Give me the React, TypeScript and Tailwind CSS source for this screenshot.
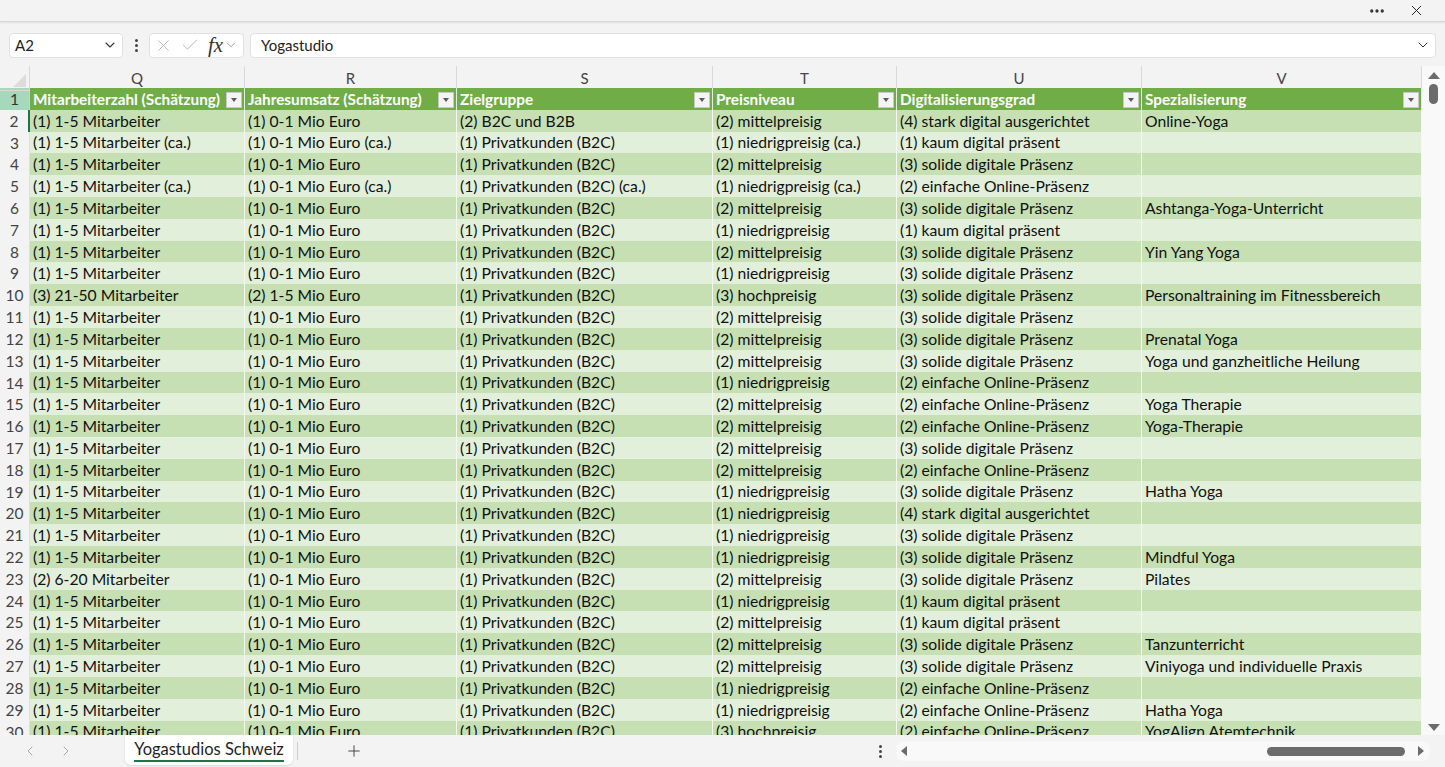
import { ChevronDown, ChevronLeft, ChevronRight, Check, X, Plus, MoreHorizontal } from "lucide-react";

const columns = [
  { letter: "Q", title: "Mitarbeiterzahl (Schätzung)" },
  { letter: "R", title: "Jahresumsatz (Schätzung)" },
  { letter: "S", title: "Zielgruppe" },
  { letter: "T", title: "Preisniveau" },
  { letter: "U", title: "Digitalisierungsgrad" },
  { letter: "V", title: "Spezialisierung" },
];

const M1 = "(1) 1-5 Mitarbeiter";
const E1 = "(1) 0-1 Mio Euro";
const P = "(1) Privatkunden (B2C)";
const MP = "(2) mittelpreisig";
const NP = "(1) niedrigpreisig";
const SD = "(3) solide digitale Präsenz";
const EO = "(2) einfache Online-Präsenz";
const KD = "(1) kaum digital präsent";
const ST = "(4) stark digital ausgerichtet";

const rows: string[][] = [
  [M1, E1, "(2) B2C und B2B", MP, ST, "Online-Yoga"],
  ["(1) 1-5 Mitarbeiter (ca.)", "(1) 0-1 Mio Euro (ca.)", P, "(1) niedrigpreisig (ca.)", KD, ""],
  [M1, E1, P, MP, SD, ""],
  ["(1) 1-5 Mitarbeiter (ca.)", "(1) 0-1 Mio Euro (ca.)", "(1) Privatkunden (B2C) (ca.)", "(1) niedrigpreisig (ca.)", EO, ""],
  [M1, E1, P, MP, SD, "Ashtanga-Yoga-Unterricht"],
  [M1, E1, P, NP, KD, ""],
  [M1, E1, P, MP, SD, "Yin Yang Yoga"],
  [M1, E1, P, NP, SD, ""],
  ["(3) 21-50 Mitarbeiter", "(2) 1-5 Mio Euro", P, "(3) hochpreisig", SD, "Personaltraining im Fitnessbereich"],
  [M1, E1, P, MP, SD, ""],
  [M1, E1, P, MP, SD, "Prenatal Yoga"],
  [M1, E1, P, MP, SD, "Yoga und ganzheitliche Heilung"],
  [M1, E1, P, NP, EO, ""],
  [M1, E1, P, MP, EO, "Yoga Therapie"],
  [M1, E1, P, MP, EO, "Yoga-Therapie"],
  [M1, E1, P, MP, SD, ""],
  [M1, E1, P, MP, EO, ""],
  [M1, E1, P, NP, SD, "Hatha Yoga"],
  [M1, E1, P, NP, ST, ""],
  [M1, E1, P, NP, SD, ""],
  [M1, E1, P, NP, SD, "Mindful Yoga"],
  ["(2) 6-20 Mitarbeiter", E1, P, MP, SD, "Pilates"],
  [M1, E1, P, NP, KD, ""],
  [M1, E1, P, MP, KD, ""],
  [M1, E1, P, MP, SD, "Tanzunterricht"],
  [M1, E1, P, MP, SD, "Viniyoga und individuelle Praxis"],
  [M1, E1, P, NP, EO, ""],
  [M1, E1, P, NP, EO, "Hatha Yoga"],
  [M1, E1, P, "(3) hochpreisig", EO, "YogAlign Atemtechnik"],
];

const gridCols = "grid grid-cols-[30px_215px_212px_256px_184px_245px_280px]";

function FilterButton() {
  return (
    <span className="ml-auto mr-[2px] flex h-[16px] w-[16px] shrink-0 items-center justify-center border border-[#c8c8c8] bg-[#f4f4f4]">
      <span className="h-0 w-0 border-x-[3.5px] border-t-[4px] border-x-transparent border-t-[#5a5a5a]" />
    </span>
  );
}

function Dots() {
  return (
    <div className="flex w-[14px] flex-col items-center gap-[2px]">
      <span className="h-[3px] w-[3px] rounded-full bg-[#444]" />
      <span className="h-[3px] w-[3px] rounded-full bg-[#444]" />
      <span className="h-[3px] w-[3px] rounded-full bg-[#444]" />
    </div>
  );
}

export default function App() {
  return (
    <div className="flex h-[767px] w-[1445px] flex-col overflow-hidden bg-[#f3f3f3] font-['Lato',sans-serif] text-[#1f1f1f]">
      {/* title strip */}
      <div className="flex h-[22px] shrink-0 items-center justify-end gap-[22px] border-b border-[#d6d6d6] bg-[#f3f3f3] pr-[20px] shadow-[0_1px_2px_rgba(0,0,0,0.08)]">
        <MoreHorizontal size={18} strokeWidth={2.4} className="text-[#333]" />
        <X size={17} strokeWidth={1.4} className="text-[#222]" />
      </div>

      {/* formula bar */}
      <div className="flex h-[44px] shrink-0 items-center gap-[6px] pl-[9px] pr-[9px] pt-[2px]">
        <div className="flex h-[25px] w-[114px] items-center justify-between rounded-[4px] border border-[#e1e1e1] bg-white pl-[5px] pr-[4px] text-[15px] text-[#222]">
          <span>A2</span>
          <ChevronDown size={16} strokeWidth={1.6} className="text-[#333]" />
        </div>
        <Dots />
        <div className="flex h-[25px] w-[95px] items-center rounded-[4px] border border-[#e1e1e1] bg-white pl-[4px] pr-[1px]">
          <X size={19} strokeWidth={1.1} className="text-[#b0b0b0]" />
          <Check size={20} strokeWidth={1.1} className="ml-[7px] text-[#b0b0b0]" />
          <span className="ml-[8px] font-['Liberation_Serif',serif] text-[21px] italic leading-none text-[#333]">fx</span>
          <ChevronDown size={14} strokeWidth={1.4} className="ml-[1px] text-[#888]" />
        </div>
        <div className="flex h-[25px] flex-1 items-center justify-between rounded-[4px] border border-[#e1e1e1] bg-white pl-[10px] pr-[4px] text-[15px] text-[#222]">
          <span>Yogastudio</span>
          <ChevronDown size={16} strokeWidth={1.5} className="text-[#333]" />
        </div>
      </div>

      {/* sheet area */}
      <div className="flex min-h-0 flex-1 bg-white">
        <div className="min-h-0 flex-1 overflow-hidden">
          {/* column letters */}
          <div className={`${gridCols} h-[22px] bg-[#f3f3f3] text-[15px] text-[#444]`}>
            <div className="relative border-b border-r border-[#d9d9d9]">
              <span className="absolute bottom-[3px] right-[3px] h-0 w-0 border-b-[13px] border-l-[13px] border-b-[#dcdcdc] border-l-transparent" />
            </div>
            {columns.map((c) => (
              <div key={c.letter} className="flex items-center justify-center border-b border-r border-[#d9d9d9] pt-[1px]">
                {c.letter}
              </div>
            ))}
          </div>

          {/* header row */}
          <div className={`${gridCols} h-[21.8px]`}>
            <div className="flex items-center justify-center border-b border-r border-[#cfcfcf] bg-[#a6d8bb] text-[15.5px] text-[#333]">
              1
            </div>
            {columns.map((c) => (
              <div
                key={c.letter}
                className="flex items-center overflow-hidden whitespace-nowrap border-b border-r border-[#e4efdb] bg-[#70ad47] pl-[3px] text-[15.3px] font-bold text-white"
              >
                <span>{c.title}</span>
                <FilterButton />
              </div>
            ))}
          </div>

          {rows.map((r, i) => {
            const dark = i % 2 === 0;
            return (
              <div key={i} className={`${gridCols} h-[21.82px]`}>
                <div
                  className={`flex items-center justify-center border-b border-r border-[#dedede] bg-[#f3f3f3] text-[15.5px] text-[#444] ${
                    i === 0 ? "border-r-2 border-r-[#217346]" : ""
                  }`}
                >
                  {i + 2}
                </div>
                {r.map((v, j) => (
                  <div
                    key={j}
                    className={`flex items-center overflow-hidden whitespace-nowrap border-b border-r border-[#f4f9f0] pl-[3px] text-[15.7px] text-[#111] ${
                      dark ? "bg-[#c6e0b4]" : "bg-[#e2efda]"
                    }`}
                  >
                    {v}
                  </div>
                ))}
              </div>
            );
          })}
        </div>

        {/* vertical scrollbar */}
        <div className="flex w-[23px] shrink-0 flex-col items-center bg-[#f9f9f9] pt-[6px] pb-[4px]">
          <span className="h-0 w-0 border-x-[6px] border-b-[7px] border-x-transparent border-b-[#6b6b6b]" />
          <span className="mt-[5px] h-[20px] w-[9px] rounded-full bg-[#6b6b6b]" />
          <span className="mt-auto h-0 w-0 border-x-[6px] border-t-[7px] border-x-transparent border-t-[#6b6b6b]" />
        </div>
      </div>

      {/* sheet tabs */}
      <div className="flex h-[32px] shrink-0 items-center bg-[#f3f3f3]">
        <div className="flex w-[125px] items-center gap-[20px] pl-[22px] text-[#9a9a9a]">
          <ChevronLeft size={16} strokeWidth={1.3} />
          <ChevronRight size={16} strokeWidth={1.3} />
        </div>
        <div className="-mt-[2px] flex h-[30px] w-[168px] items-center justify-center rounded-b-[6px] bg-white text-[16.5px] text-[#1f1f1f] shadow-[0_1px_2px_rgba(0,0,0,0.12)]">
          <span className="border-b-2 border-[#217346] pb-[1px] leading-[20px]">Yogastudios Schweiz</span>
        </div>
        <span className="ml-[4px] h-[18px] w-px bg-[#cfcfcf]" />
        <Plus size={18} strokeWidth={1.3} className="ml-[47px] text-[#444]" />
        <div className="ml-[510px]">
          <Dots />
        </div>
        <div className="ml-[9px] flex h-[20px] w-[534px] items-center rounded-[8px] bg-[#f9f9f9] pl-[5px] pr-[6px]">
          <span className="h-0 w-0 border-y-[5px] border-r-[6px] border-y-transparent border-r-[#6b6b6b]" />
          <span className="ml-auto h-[9px] w-[138px] rounded-full bg-[#6b6b6b]" />
          <span className="ml-[13px] h-0 w-0 border-y-[5px] border-l-[6px] border-y-transparent border-l-[#6b6b6b]" />
        </div>
      </div>
    </div>
  );
}
